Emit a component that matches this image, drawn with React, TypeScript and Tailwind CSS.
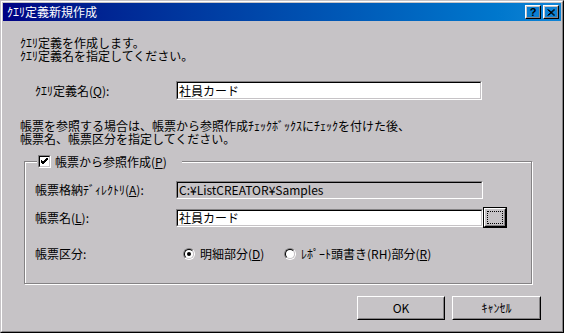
import React from "react";

const U = ({ c }: { c: string }) => <span className="underline underline-offset-[1px]">{c}</span>;

function Sunken({ children, className = "", inner = "bg-white" }: { children?: React.ReactNode; className?: string; inner?: string }) {
  return (
    <div className={`border border-t-[#848284] border-l-[#848284] border-b-white border-r-white ${className}`}>
      <div className={`h-full border border-t-black border-l-black border-b-[#c6c3c6] border-r-[#c6c3c6] ${inner} flex items-center pl-[1px]`}>
        {children}
      </div>
    </div>
  );
}

function Button({ children, className = "" }: { children?: React.ReactNode; className?: string }) {
  return (
    <div className={`border border-t-white border-l-white border-b-black border-r-black ${className}`}>
      <div className="h-full border border-t-[#c6c3c6] border-l-[#c6c3c6] border-b-[#848284] border-r-[#848284] flex items-center justify-center">
        {children}
      </div>
    </div>
  );
}

function Radio({ checked }: { checked?: boolean }) {
  return (
    <div className="w-[12px] h-[12px] rounded-full border border-t-[#848284] border-l-[#848284] border-b-white border-r-white shrink-0">
      <div className="w-full h-full rounded-full border border-t-black border-l-black border-b-[#c6c3c6] border-r-[#c6c3c6] bg-white flex items-center justify-center">
        {checked && <div className="w-[4px] h-[4px] rounded-full bg-black" />}
      </div>
    </div>
  );
}

export default function App() {
  return (
    <div className="w-[564px] h-[333px] bg-[#c6c3c6] border border-t-[#c6c3c6] border-l-[#c6c3c6] border-b-black border-r-black font-['Noto_Sans_CJK_JP',sans-serif] text-[12px] leading-[12px] text-black">
      <div className="h-full border border-t-white border-l-white border-b-[#848284] border-r-[#848284] p-px flex flex-col">
        {/* Title bar */}
        <div className="h-[18px] bg-linear-to-r from-[#000084] to-[#1084d6] flex items-center pl-[4px] pr-[2px] shrink-0">
          <span className="text-white flex-1">ｸｴﾘ定義新規作成</span>
          <div className="flex gap-[2px]">
            <Button className="w-[16px] h-[14px]">
              <span className="font-['Liberation_Sans',sans-serif] font-bold text-[11px] leading-[11px]">?</span>
            </Button>
            <Button className="w-[16px] h-[14px]">
              <svg width="8" height="7" viewBox="0 0 8 7">
                <path d="M0.5 0.5 L7 6.5 M1.5 0.5 L8 6.5 M7 0.5 L0.5 6.5 M8 0.5 L1.5 6.5" stroke="black" strokeWidth="1" />
              </svg>
            </Button>
          </div>
        </div>

        {/* Body */}
        <div className="flex flex-col flex-1">
          <div className="mt-[15px] pl-[17px] leading-[13px]">
            <div>ｸｴﾘ定義を作成します。</div>
            <div>ｸｴﾘ定義名を指定してください。</div>
          </div>

          <div className="mt-[19px] pl-[32px] flex items-center">
            <div className="w-[141px]">ｸｴﾘ定義名(<U c="Q" />):</div>
            <Sunken className="w-[306px] h-[19px]">社員カード</Sunken>
          </div>

          <div className="mt-[19px] pl-[17px] leading-[13px]">
            <div>帳票を参照する場合は、帳票から参照作成ﾁｪｯｸﾎﾞｯｸｽにﾁｪｯｸを付けた後、</div>
            <div>帳票名、帳票区分を指定してください。</div>
          </div>

          {/* Group box */}
          <div className="mt-[16px] ml-[21px] w-[508px] h-[123px] border border-[#848284] shadow-[inset_1px_1px_0_#fff,1px_1px_0_#fff] flex flex-col">
            <div className="-mt-[7px] ml-[12px] self-start bg-[#c6c3c6] pl-[1px] pr-[15px] flex items-center gap-[4px] h-[13px]">
              <div className="w-[13px] h-[13px] border border-t-[#848284] border-l-[#848284] border-b-white border-r-white shrink-0">
                <div className="w-full h-full border border-t-black border-l-black border-b-[#c6c3c6] border-r-[#c6c3c6] bg-white flex items-center justify-center">
                  <svg width="7" height="7" viewBox="0 0 7 7">
                    <path d="M0 2 L2 4 L7 -1 M0 3 L2 5 L7 0 M0 4 L2 6 L7 1" stroke="black" strokeWidth="1" fill="none" />
                  </svg>
                </div>
              </div>
              <span>帳票から参照作成(<U c="P" />)</span>
            </div>

            <div className="mt-[13px] pl-[10px] flex items-center">
              <div className="w-[141px]">帳票格納ﾃﾞｨﾚｸﾄﾘ(<U c="A" />):</div>
              <Sunken className="w-[307px] h-[18px]" inner="bg-[#c6c3c6]">C:¥ListCREATOR¥Samples</Sunken>
            </div>

            <div className="mt-[8px] pl-[10px] flex items-center">
              <div className="w-[141px]">帳票名(<U c="L" />):</div>
              <Sunken className="w-[307px] h-[18px]">社員カード</Sunken>
              <div className="w-[24px] h-[21px] border border-black">
                <Button className="w-full h-full">
                  <div className="w-[16px] h-[13px] border border-dotted border-black" />
                </Button>
              </div>
            </div>

            <div className="mt-[18px] pl-[10px] flex items-center h-[16px]">
              <div className="w-[148px]">帳票区分:</div>
              <div className="w-[101px] flex items-center gap-[5px]">
                <Radio checked />
                <span>明細部分(<U c="D" />)</span>
              </div>
              <div className="flex items-center gap-[5px]">
                <Radio />
                <span>ﾚﾎﾟｰﾄ頭書き(RH)部分(<U c="R" />)</span>
              </div>
            </div>
          </div>

          <div className="mt-[12px] pr-[20px] flex justify-end gap-[7px]">
            <Button className="w-[88px] h-[24px]">OK</Button>
            <Button className="w-[89px] h-[24px]">ｷｬﾝｾﾙ</Button>
          </div>
        </div>
      </div>
    </div>
  );
}
